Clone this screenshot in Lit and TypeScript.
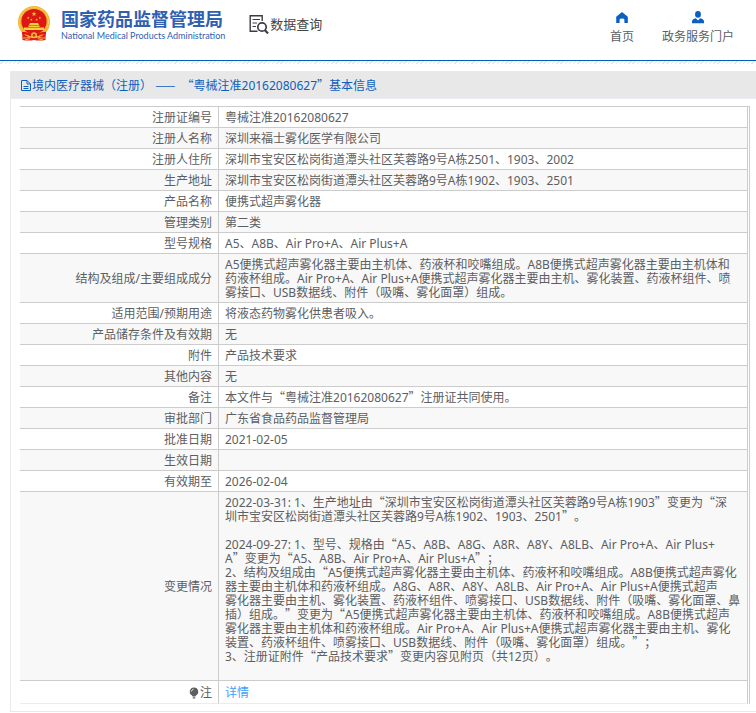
import { LitElement, html, css, svg } from "lit";
import { customElement } from "lit/decorators.js";

interface Row {
  label: string;
  value: string;
}

const rows: Row[] = [
  { label: "注册证编号", value: "粤械注准20162080627" },
  { label: "注册人名称", value: "深圳来福士雾化医学有限公司" },
  { label: "注册人住所", value: "深圳市宝安区松岗街道潭头社区芙蓉路9号A栋2501、1903、2002" },
  { label: "生产地址", value: "深圳市宝安区松岗街道潭头社区芙蓉路9号A栋1902、1903、2501" },
  { label: "产品名称", value: "便携式超声雾化器" },
  { label: "管理类别", value: "第二类" },
  { label: "型号规格", value: "A5、A8B、Air Pro+A、Air Plus+A" },
  {
    label: "结构及组成/主要组成成分",
    value:
      "A5便携式超声雾化器主要由主机体、药液杯和咬嘴组成。A8B便携式超声雾化器主要由主机体和药液杯组成。Air Pro+A、Air Plus+A便携式超声雾化器主要由主机、雾化装置、药液杯组件、喷雾接口、USB数据线、附件（吸嘴、雾化面罩）组成。",
  },
  { label: "适用范围/预期用途", value: "将液态药物雾化供患者吸入。" },
  { label: "产品储存条件及有效期", value: "无" },
  { label: "附件", value: "产品技术要求" },
  { label: "其他内容", value: "无" },
  { label: "备注", value: "本文件与“粤械注准20162080627”注册证共同使用。" },
  { label: "审批部门", value: "广东省食品药品监督管理局" },
  { label: "批准日期", value: "2021-02-05" },
  { label: "生效日期", value: "" },
  { label: "有效期至", value: "2026-02-04" },
  {
    label: "变更情况",
    value:
      "2022-03-31: 1、生产地址由“深圳市宝安区松岗街道潭头社区芙蓉路9号A栋1903”变更为“深\n圳市宝安区松岗街道潭头社区芙蓉路9号A栋1902、1903、2501”。\n\n" +
      "2024-09-27: 1、型号、规格由“A5、A8B、A8G、A8R、A8Y、A8LB、Air Pro+A、Air Plus+\nA”变更为“A5、A8B、Air Pro+A、Air Plus+A”；\n" +
      "2、结构及组成由“A5便携式超声雾化器主要由主机体、药液杯和咬嘴组成。A8B便携式超声雾化器主要由主机体和药液杯组成。A8G、A8R、A8Y、A8LB、Air Pro+A、Air Plus+A便携式超声\n雾化器主要由主机、雾化装置、药液杯组件、喷雾接口、USB数据线、附件（吸嘴、雾化面罩、鼻插）组成。”变更为“A5便携式超声雾化器主要由主机体、药液杯和咬嘴组成。A8B便携式超声雾化器主要由主机体和药液杯组成。Air Pro+A、Air Plus+A便携式超声雾化器主要由主机、雾化装置、药液杯组件、喷雾接口、USB数据线、附件（吸嘴、雾化面罩）组成。”；\n" +
      "3、注册证附件“产品技术要求”变更内容见附页（共12页）。\n\n",
  },
];

// Curly quotes and dashes take the full-width form of the Chinese font.
const wide = (text: string) =>
  text.split(/([“”—]+)/).map((part, i) => (i % 2 ? html`<span class="wide">${part}</span>` : part));

const star = (x: number, y: number, r: number) => {
  const points = Array.from({ length: 10 }, (_, i) => {
    const a = (Math.PI * i) / 5 - Math.PI / 2;
    const d = i % 2 ? r * 0.4 : r;
    return `${(x + d * Math.cos(a)).toFixed(2)},${(y + d * Math.sin(a)).toFixed(2)}`;
  }).join(" ");
  return svg`<polygon points=${points} fill="#ffd21f" />`;
};

const emblem = html`<svg class="emblem" viewBox="0 0 34 36" aria-hidden="true">
  <path d="M5 22 L29 22 L28.5 34 Q22 35 17 34 Q12 35 5.5 34Z" fill="#d8201d" />
  <circle cx="17" cy="16" r="16" fill="#f2b632" />
  <circle cx="17" cy="16" r="14.5" fill="none" stroke="#f9d562" stroke-width="1" stroke-dasharray="2 1.4" />
  <circle cx="17" cy="15.5" r="12.6" fill="#dd1714" />
  ${star(17, 8, 2.6)} ${star(11.2, 12, 1.4)} ${star(14.4, 13.6, 1.4)} ${star(19.6, 13.6, 1.4)} ${star(22.8, 12, 1.4)}
  <path d="M13 17h8l1 2h-10z M11.5 19.5h11v1.5h-11z M7 21.5h20v2.5h-20z" fill="#f8cf3d" />
  <path d="M5 27 Q11 27 14.5 29.5 M29 27 Q23 27 19.5 29.5" stroke="#dd1714" stroke-width="2.6" fill="none" />
  <circle cx="17" cy="29.3" r="3" fill="#f2b632" />
  <circle cx="17" cy="29.3" r="1.2" fill="#dd1714" />
  <path d="M6 32 Q10 32.5 13.5 30.8 M28 32 Q24 32.5 20.5 30.8 M8 34 L13 32.6 M26 34 L21 32.6" stroke="#f2b632" fill="none" />
</svg>`;

@customElement("app-root")
export class AppRoot extends LitElement {
  static styles = css`
    :host {
      display: block;
      background: #fff;
      color: #5c5e62;
      font: 12px/14px "Noto Sans", "Noto Sans CJK SC", sans-serif;
      text-spacing-trim: space-all;
    }
    a {
      color: inherit;
      text-decoration: none;
    }
    svg {
      display: block;
      flex: none;
    }
    .wide {
      font-family: "Noto Sans CJK SC", sans-serif;
      line-height: 0;
    }
    .header {
      display: flex;
      align-items: flex-start;
      height: 60px;
      border-bottom: 1px solid #0060bf;
    }
    .brand {
      display: flex;
      gap: 10px;
      margin: 6px 0 0 17px;
      color: #2f60b2;
    }
    .emblem {
      width: 34px;
      height: 36px;
    }
    .name {
      display: flex;
      flex-direction: column;
      margin-top: 1px;
    }
    .name-zh {
      font: 700 18px/23px "Noto Sans CJK SC", sans-serif;
    }
    .name-en {
      font: 400 9px/12px Lato, sans-serif;
      white-space: nowrap;
    }
    .query {
      display: flex;
      align-items: center;
      margin: 14px 0 0 24px;
      font-size: 13px;
      line-height: 20px;
      white-space: nowrap;
      color: #444;
    }
    .nav {
      display: flex;
      gap: 28px;
      margin: 11px 22px 0 auto;
    }
    .nav-link {
      display: flex;
      flex-direction: column;
      align-items: center;
      gap: 5px;
      white-space: nowrap;
    }
    .hatch {
      height: 3px;
      background: repeating-linear-gradient(135deg, #fff 0 2px, #e6e6e8 2px 3px);
    }
    .panel {
      margin: 7px 0 1px 10px;
      border-left: 1px solid #e9e9eb;
      border-bottom: 1px solid #e9e9eb;
    }
    .title {
      display: flex;
      align-items: center;
      margin: 0;
      padding: 2px 0 0 9px;
      border-bottom: 1px solid #ebebf3;
      background: #e8e8e8;
      color: #0b5fc0;
      font-size: 12px;
      font-weight: 400;
      line-height: 25px;
    }
    .body {
      padding: 7px 6px 7px 9px;
    }
    .table {
      width: 100%;
      border-collapse: separate;
      border-spacing: 0;
      border: solid #ccc;
      border-width: 1px 1px 0 0;
      padding-right: 1px;
      background: #fff;
    }
    .label,
    .value {
      padding: 4px 6px 2px;
      border-right: 1px solid #ccc;
      border-bottom: 1px solid #ccc;
      height: 14px;
      font-weight: 400;
      vertical-align: middle;
    }
    .label {
      box-sizing: content-box;
      width: 186px;
      text-align: right;
    }
    .value {
      text-align: left;
      white-space: pre-wrap;
      word-break: break-all;
    }
    .row:nth-child(even) {
      background: #f8f8f8;
    }
    .row:last-child .label,
    .row:last-child .value {
      padding: 5px 6px 3px;
      border-bottom-color: #ebebf3;
    }
    .note {
      display: flex;
      justify-content: flex-end;
      align-items: center;
    }
    .detail {
      color: #409eff;
    }
  `;

  render() {
    return html`
      <header class="header">
        <a class="brand" href="#">
          ${emblem}
          <span class="name">
            <span class="name-zh">国家药品监督管理局</span>
            <span class="name-en">National Medical Products Administration</span>
          </span>
        </a>
        <a class="query" href="#">
          <svg width="21" height="20" viewBox="0 0 21 20" fill="none" stroke="#3c3c44" aria-hidden="true">
            <path d="M8.5 17.2H1.2V1.8H13.2V7" stroke-width="1.4" />
            <path d="M3.5 5.5H11M3.5 9H8M3.5 12.5H7" stroke-width="1.2" />
            <circle cx="13" cy="13" r="4.2" stroke-width="1.7" />
            <path d="M16 16.2L19 19.4" stroke-width="2.2" />
          </svg>
          <span>数据查询</span>
        </a>
        <nav class="nav">
          <a class="nav-link" href="#">
            <svg width="14" height="14" viewBox="0 0 14 14" aria-hidden="true">
              <path d="M7 1 L12.8 5.8 V12 H9.4 V8.6 Q9.2 7.4 7 7.4 Q4.8 7.4 4.6 8.6 V12 H1.2 V5.8Z" fill="#0b5fc0" />
            </svg>
            <span>首页</span>
          </a>
          <a class="nav-link" href="#">
            <svg width="14" height="14" viewBox="0 0 14 14" fill="#0b5fc0" aria-hidden="true">
              <ellipse cx="7" cy="3.4" rx="2.9" ry="3.3" />
              <path d="M1 12.2 V10.6 Q1 8 4.8 7.2 L7 9.4 L9.2 7.2 Q13 8 13 10.6 V12.2Z" />
            </svg>
            <span>政务服务门户</span>
          </a>
        </nav>
      </header>
      <div class="hatch"></div>
      <main class="panel">
        <h1 class="title">
          <svg width="12" height="12" viewBox="0 0 12 12" fill="none" stroke="#0b5fc0" aria-hidden="true">
            <path d="M1.5 0.5H7L10.5 4V10.5H1.5Z M7 0.5V4H10.5 M3.5 6.5H8.5 M3.5 8.5H8.5" />
          </svg>
          <span>${wide("境内医疗器械（注册） ——\u00a0 “粤械注准20162080627”基本信息")}</span>
        </h1>
        <div class="body">
          <table class="table">
            <tbody>
              ${rows.map(
                (row) => html`<tr class="row">
                  <th class="label" scope="row">${row.label}</th>
                  <td class="value">${wide(row.value)}</td>
                </tr>`
              )}
              <tr class="row">
                <th class="label" scope="row">
                  <span class="note">
                    <svg width="12" height="12" viewBox="0 0 12 12" aria-hidden="true">
                      <path d="M6 0.5 A4.2 4.2 0 0 1 8 8.4 L7.4 9.4 H4.6 L4 8.4 A4.2 4.2 0 0 1 6 0.5Z M4.8 10.2h2.4v1.3h-2.4z" fill="#5c5e62" />
                      <path d="M3.4 4.6 Q3.6 2.6 5.6 2.2" stroke="#fff" stroke-width="0.8" fill="none" />
                    </svg>
                    <span>注</span>
                  </span>
                </th>
                <td class="value"><a class="detail" href="#">详情</a></td>
              </tr>
            </tbody>
          </table>
        </div>
      </main>
    `;
  }
}
